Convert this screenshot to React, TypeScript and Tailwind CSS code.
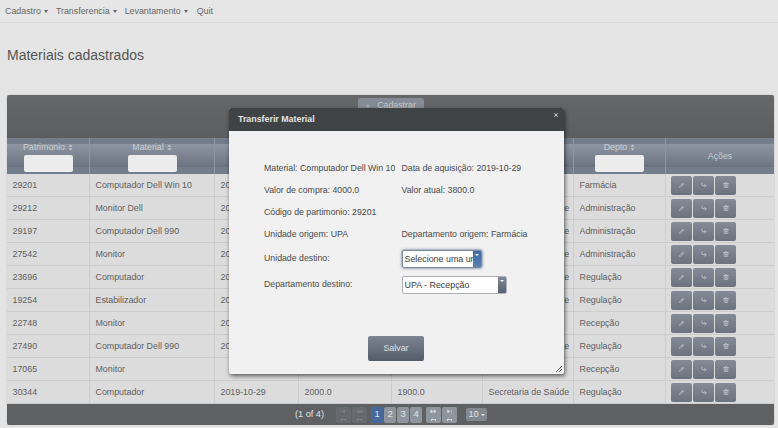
import React from "react";
import { Pencil, CornerDownRight, Trash2, Plus, X } from "lucide-react";

const rows = [
  ["29201", "Computador Dell Win 10", "2019-10-29", "4000.0", "3800.0", "UPA", "Farmácia"],
  ["29212", "Monitor Dell", "2019-10-29", "1000.0", "900.0", "Secretaria de Saúde", "Administração"],
  ["29197", "Computador Dell 990", "2019-10-29", "3000.0", "2800.0", "Secretaria de Saúde", "Administração"],
  ["27542", "Monitor", "2019-10-29", "800.0", "700.0", "Secretaria de Saúde", "Administração"],
  ["23696", "Computador", "2019-10-29", "2000.0", "1900.0", "Secretaria de Saúde", "Regulação"],
  ["19254", "Estabilizador", "2019-10-29", "200.0", "150.0", "Secretaria de Saúde", "Regulação"],
  ["22748", "Monitor", "2019-10-29", "800.0", "700.0", "UPA", "Recepção"],
  ["27490", "Computador Dell 990", "2019-10-29", "3000.0", "2800.0", "Secretaria de Saúde", "Regulação"],
  ["17065", "Monitor", "", "800.0", "700.0", "UPA", "Recepção"],
  ["30344", "Computador", "2019-10-29", "2000.0", "1900.0", "Secretaria de Saúde", "Regulação"],
];

const cols = "grid grid-cols-[83px_125px_84px_93px_91px_91px_92px_108px]";

function Caret() {
  return <span className="ml-[3px] inline-block h-0 w-0 border-x-[2px] border-t-[3px] border-x-transparent border-t-[#666] align-middle" />;
}

function Sort() {
  return (
    <svg width="5" height="7" viewBox="0 0 5 7" className="ml-[3px] inline-block">
      <path d="M2.5 0.5 L4.5 2.8 H0.5 Z M2.5 6.5 L4.5 4.2 H0.5 Z" fill="#c5cad0" />
    </svg>
  );
}

function HeadCell({ label, filter, last }: { label: string; filter?: boolean; last?: boolean }) {
  return (
    <div className={`flex flex-col items-center ${last ? "" : "border-r border-[#8d96a2]"} bg-[linear-gradient(#737d8b_0,#737d8b_6px,#8e96a3_6px,#6c7280_29px,#737d8b_29px,#737d8b_36px)]`}>
      {filter ? (
        <>
          <div className="mt-[3px] h-[12px] text-[8.8px] leading-[12px] text-[#c9ced4]">
            {label}
            <Sort />
          </div>
          <div className="mt-[2px] h-[17px] w-[49px] rounded-[2px] bg-[#ececec]" />
        </>
      ) : (
        <div className="mt-[12px] text-[8.8px] leading-[12px] text-[#c9ced4]">{label}</div>
      )}
    </div>
  );
}

function ActionBtn({ children }: { children: React.ReactNode }) {
  return (
    <div className="flex h-[19px] w-[21px] items-center justify-center rounded-[2px] bg-[linear-gradient(#848b97,#6c727e)] text-[#c9cdd3]">
      {children}
    </div>
  );
}

function PageIcon({ dir, muted }: { dir: "first" | "prev" | "next" | "last"; muted?: boolean }) {
  const top = {
    first: "M1 1 V5 M6 1 L3 3 L6 5 Z",
    prev: "M4 1 L1 3 L4 5 Z M8 1 L5 3 L8 5 Z",
    next: "M1 1 L4 3 L1 5 Z M5 1 L8 3 L5 5 Z",
    last: "M2 1 L5 3 L2 5 Z M7 1 V5",
  }[dir];
  return (
    <div className={`flex h-[16px] w-[15px] flex-col items-center justify-between rounded-[2px] py-[2px] ${muted ? "bg-[#676a6f]" : "bg-[#8f959d]"}`}>
      <svg width="7" height="5" viewBox="0 0 9 6" stroke={muted ? "#7d8085" : "#d8dbdf"} fill={muted ? "#7d8085" : "#d8dbdf"} strokeWidth="0.7">
        <path d={top} />
      </svg>
      <div className={`h-[2px] w-[5px] border border-b-0 ${muted ? "border-[#7d8085]" : "border-[#d8dbdf]"}`} />
    </div>
  );
}

function PageNum({ n, active }: { n: number; active?: boolean }) {
  return (
    <div className={`flex h-[16px] w-[12px] items-center justify-center rounded-[2px] text-[9.5px] text-[#dfe2e6] ${active ? "bg-[#47699a]" : "bg-[#8f959d]"}`}>
      {n}
    </div>
  );
}

function SelectBox({ width, label, focused }: { width: string; label: string; focused?: boolean }) {
  return (
    <div className={`flex h-[18px] overflow-hidden rounded-[2px] border bg-white ${width} ${focused ? "border-[#7a8aa0] shadow-[0_0_3px_#47557a]" : "border-[#aeb2b8]"}`}>
      <div className="min-w-0 flex-1 overflow-hidden whitespace-nowrap pl-[2px] text-[8.9px] leading-[17px] text-[#3c3c3c]">{label}</div>
      <div className={`flex w-[8px] shrink-0 items-start justify-center pt-[3px] ${focused ? "bg-[linear-gradient(#3f6ba6,#5a7fb0)]" : "bg-[linear-gradient(#7f8795,#596070)]"}`}>
        <span className="h-0 w-0 border-x-[2px] border-t-[2px] border-x-transparent border-t-white" />
      </div>
    </div>
  );
}

export default function App() {
  return (
    <div className="relative h-[428px] w-[778px] overflow-hidden bg-[#e4e4e4] font-['Liberation_Sans',sans-serif] text-[#555]">
      <nav className="flex h-[23px] items-center gap-[8px] border-b border-[#dcdcdc] bg-[#e6e6e6] pl-[5px] pt-[1px] text-[8.85px] text-[#666]">
        <span>Cadastro<Caret /></span>
        <span>Transferencia<Caret /></span>
        <span>Levantamento<Caret /></span>
        <span className="ml-[1px]">Quit</span>
      </nav>

      <h1 className="pl-[7px] pt-[23px] text-[14px] font-normal leading-[18px] text-[#555]">Materiais cadastrados</h1>

      <section className="ml-[7px] mr-[4px] mt-[31px] overflow-hidden rounded-[2px] shadow-[0_0_1px_#888]">
        <div className="flex h-[43px] justify-center bg-[linear-gradient(#666769,#5c5d5f)] pt-[3px]">
          <div className="flex h-[12px] w-[66px] justify-center gap-[6px] rounded-t-[2px] bg-[#858b94] pt-[1px] text-[8.8px] leading-[12px] text-[#c3c7cc]">
            <Plus size={6} className="mt-[4px]" />
            Cadastrar
          </div>
        </div>

        <div className={`${cols} h-[36px]`}>
          <HeadCell label="Patrimonio" filter />
          <HeadCell label="Material" filter />
          <HeadCell label="Data" filter />
          <HeadCell label="Valor" filter />
          <HeadCell label="Atual" filter />
          <HeadCell label="Unidade" filter />
          <HeadCell label="Depto" filter />
          <HeadCell label="Ações" last />
        </div>

        {rows.map((r) => (
          <div key={r[0]} className={`${cols} h-[23px] border-b border-[#cdcdcd] bg-[#dcdcdc] text-[8.85px] leading-[23px] text-[#606060]`}>
            {r.map((c, i) => (
              <div key={i} className="overflow-hidden whitespace-nowrap border-r border-[#cdcdcd] pl-[5.5px]">{c}</div>
            ))}
            <div className="flex items-center gap-[1px] pl-[5px]">
              <ActionBtn><Pencil size={5} strokeWidth={3} /></ActionBtn>
              <ActionBtn><CornerDownRight size={6} strokeWidth={3} /></ActionBtn>
              <ActionBtn><Trash2 size={6} strokeWidth={2.5} /></ActionBtn>
            </div>
          </div>
        ))}

        <div className="flex h-[21px] items-center justify-center gap-[1px] bg-[#5f6062] pl-[1px] text-[9.2px] text-[#dfe2e6]">
          <span className="mr-[11px]">(1 of 4)</span>
          <PageIcon dir="first" muted />
          <PageIcon dir="prev" muted />
          <div className="w-[2px]" />
          <PageNum n={1} active />
          <PageNum n={2} />
          <PageNum n={3} />
          <PageNum n={4} />
          <div className="w-[2px]" />
          <PageIcon dir="next" />
          <PageIcon dir="last" />
          <div className="ml-[8px] flex h-[13px] w-[21px] items-center justify-center gap-[2px] rounded-[2px] bg-[#83888f]">
            10
            <span className="h-0 w-0 border-x-[2px] border-t-[2px] border-x-transparent border-t-white" />
          </div>
        </div>
      </section>

      <div className="absolute left-[229px] top-[108px] h-[266px] w-[335px] overflow-hidden rounded-[2px] bg-[#f1f1f1] shadow-[1px_2px_4px_rgba(0,0,0,0.6)]">
        <div className="flex h-[23px] items-center justify-between bg-[#404345] pl-[9px] pr-[5px] pt-[1px] text-[8.85px] font-bold text-[#e2e2e2]">
          <span>Transferir Material</span>
          <X size={6} strokeWidth={4} className="-mt-[10px] text-[#cfcfcf]" />
        </div>

        <div className="grid grid-cols-[137.5px_1fr] gap-y-[11px] pl-[35px] pt-[32px] text-[8.75px] leading-[11px] text-[#4a4a4a]">
          <div className="whitespace-nowrap">Material: Computador Dell Win 10</div>
          <div>Data de aquisição: 2019-10-29</div>
          <div>Valor de compra: 4000.0</div>
          <div>Valor atual: 3800.0</div>
          <div className="col-span-2">Código de partimonio: 29201</div>
          <div>Unidade origem: UPA</div>
          <div>Departamento origem: Farmácia</div>
          <div className="-mt-[2px] self-center">Unidade destino:</div>
          <div className="-mt-[1px]">
            <SelectBox width="w-[80px]" label="Selecione uma unidade" focused />
          </div>
          <div className="-mt-[4px] self-center">Departamento destino:</div>
          <div className="-mt-[3px]">
            <SelectBox width="w-[105px]" label="UPA - Recepção" />
          </div>
        </div>

        <div className="absolute bottom-[13px] left-[139px] flex h-[25px] w-[56px] items-center justify-center rounded-[2px] bg-[linear-gradient(#7d8593,#555c69)] text-[8.85px] text-[#dfe2e6]">
          Salvar
        </div>
        <svg width="6" height="6" viewBox="0 0 6 6" className="absolute bottom-[2px] right-[2px]" stroke="#666" strokeWidth="1">
          <path d="M0 6 L6 0 M3 6 L6 3" />
        </svg>
      </div>
    </div>
  );
}
